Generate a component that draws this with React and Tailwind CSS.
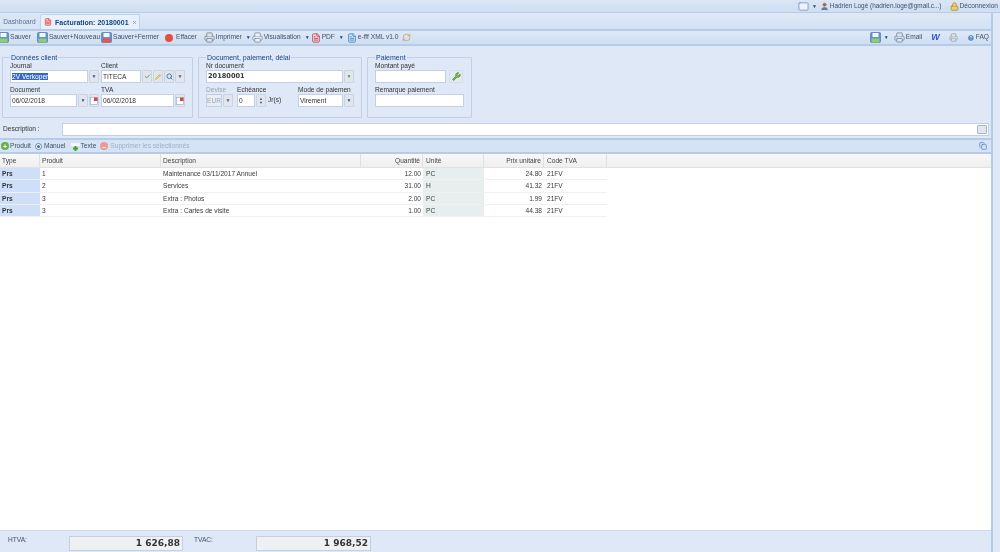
import React from "react";
import { Printer, FileText, Search, X, Mail, HelpCircle, Copy, User, Lock, Check, Wrench, RefreshCw, Pencil } from "lucide-react";

const Caret = () => <span className="ml-[3px] text-[5px] leading-none text-[#15428b]">▼</span>;

function Floppy({ accent = "#8fce6f", className = "" }) {
  return (
    <svg width="11" height="11" viewBox="0 0 11 11" className={"shrink-0 " + className}>
      <rect x="0.5" y="0.5" width="10" height="10" rx="1" fill="#5f93d0" stroke="#3f6fae" strokeWidth="0.6" />
      <rect x="2.5" y="1" width="6" height="4" fill="#f4f8fd" />
      <rect x="1.5" y="6.5" width="8" height="4" fill={accent} />
    </svg>
  );
}

function ToolBtn({ icon, label, caret, muted, className = "" }) {
  return (
    <div className={"flex items-center gap-px whitespace-nowrap " + className}>
      {icon}
      <span className={muted ? "text-[#9fb0c9]" : "text-[#40506b]"}>{label}</span>
      {caret && <Caret />}
    </div>
  );
}

function Field({ label, className = "", labelColor = "text-[#333]", children }) {
  return (
    <div className={"flex flex-col " + className}>
      <span className={"h-[9px] leading-[9px] " + labelColor}>{label}</span>
      <div className="flex items-center gap-px">{children}</div>
    </div>
  );
}

const Input = ({ value = "", className = "", children }) => (
  <div className={"h-[13px] border border-[#c3cfe2] bg-white px-px leading-[11px] text-[#333] " + className}>{children ?? value}</div>
);

const Trig = ({ children }) => (
  <div className="flex h-[13px] w-[10px] shrink-0 items-center justify-center rounded-[1px] border border-[#c9d3e2] bg-[#e2e6ec]">
    {children ?? <span className="text-[5px] leading-none text-[#2f5a98]">▼</span>}
  </div>
);

const Cal = () => (
  <Trig>
    <svg width="8" height="8" viewBox="0 0 8 8">
      <rect x="0.5" y="0.5" width="7" height="7" fill="#fff" stroke="#9aa7bb" strokeWidth="0.6" />
      <rect x="4" y="0.5" width="3.5" height="3.5" fill="#d8434f" />
    </svg>
  </Trig>
);

function Group({ title, className, children }) {
  return (
    <fieldset className={"h-[64px] min-w-0 rounded-[1px] border border-[#c3cfe2] px-[7px] pb-0 " + className}>
      <legend className="px-px text-[7px] leading-[7px] text-[#15428b]">{title}</legend>
      {children}
    </fieldset>
  );
}

const rows = [
  ["Prs", "1", "Maintenance 03/11/2017 Annuel", "12.00", "PC", "24.80", "21FV"],
  ["Prs", "2", "Services", "31.00", "H", "41.32", "21FV"],
  ["Prs", "3", "Extra : Photos", "2.00", "PC", "1.99", "21FV"],
  ["Prs", "3", "Extra : Cartes de visite", "1.00", "PC", "44.38", "21FV"],
];

const cols = "grid w-[607px] shrink-0 grid-cols-[40px_121px_200px_62px_61px_60px_63px]";

export default function App() {
  return (
    <div className="flex h-[552px] w-[1000px] flex-col overflow-hidden bg-[#dfe8f6] font-['Liberation_Sans',sans-serif] text-[6.6px] leading-none blur-[0.45px]">
      {/* top strip */}
      <div className="flex h-[13px] shrink-0 items-center justify-end border-b border-[#b4cbe9] bg-linear-to-b from-[#dbe6f5] to-[#cfdef2] pr-[2px] text-[#40506b]">
        <div className="flex items-center">
          <Mail size={11} color="#7f9cc8" fill="#eef3fa" />
          <Caret />
        </div>
        <div className="ml-[3px] flex items-center gap-px">
          <User size={9} color="#b5651d" fill="#4d7cc0" />
          <span className="text-[6.4px]">Hadrien Logé (hadrien.loge@gmail.c...)</span>
        </div>
        <div className="ml-[8px] flex items-center gap-px">
          <Lock size={9} color="#a58a2a" fill="#e8cf6b" />
          <span>Déconnexion</span>
        </div>
      </div>

      <div className="flex min-h-0 flex-1">
        <div className="flex min-w-0 flex-1 flex-col">
          {/* tabs */}
          <div className="flex h-[18px] shrink-0 items-end border-b-2 border-[#b4cbe9] bg-linear-to-b from-[#dfe9f7] to-[#d3e1f3] pl-[1px]">
            <div className="flex h-[14px] w-[37px] items-center justify-center rounded-t-[1px] bg-[#d9e5f5] text-[#5a6f92]">Dashboard</div>
            <div className="ml-[2px] flex h-[15px] w-[100px] items-center gap-[3px] rounded-t-[2px] border border-b-0 border-[#c0d3ec] bg-[#e8f0fa] pl-[3px] text-[7px] font-bold text-[#15428b]">
              <FileText size={8} color="#d9333f" fill="#f6c6c6" className="shrink-0" />
              <span className="whitespace-nowrap">Facturation: 20180001</span>
              <X size={5} color="#7d8fae" strokeWidth={3} className="shrink-0" />
            </div>
          </div>

          {/* toolbar */}
          <div className="flex h-[15px] shrink-0 items-center border-b-2 border-[#b4cbe9] bg-linear-to-b from-[#dfe9f7] to-[#cfdef2]">
            <div className="flex items-center">
              <ToolBtn icon={<Floppy className="ml-[-2px]" />} label="Sauver" />
              <ToolBtn className="ml-[6px]" icon={<Floppy />} label="Sauver+Nouveau" />
              <ToolBtn className="ml-[1px]" icon={<Floppy accent="#e8574a" />} label="Sauver+Fermer" />
              <ToolBtn className="ml-[6px]" icon={<span className="mr-[2px] h-[8px] w-[8px] rounded-full bg-[#e2503f]" />} label="Effacer" />
              <ToolBtn className="ml-[7px]" icon={<Printer size={11} color="#7d8b9c" fill="#dfe5ec" />} label="Imprimer" caret />
              <ToolBtn className="ml-[1px]" icon={<Printer size={11} color="#8495ad" fill="#eef2f7" />} label="Visualisation" caret />
              <ToolBtn className="ml-[1px]" icon={<FileText size={10} color="#d9333f" />} label="PDF" caret />
              <ToolBtn className="ml-[3px]" icon={<FileText size={10} color="#3f83c6" fill="#cfe3f6" />} label="e-fff XML v1.0" />
              <RefreshCw size={9} color="#c79b63" className="ml-[4px]" />
            </div>
            <div className="ml-auto flex items-center pr-[2px]">
              <div className="flex items-center"><Floppy /><Caret /></div>
              <ToolBtn className="ml-[5px]" icon={<Printer size={11} color="#7d8fae" fill="#dfe5ec" />} label="Email" />
              <span className="ml-[9px] text-[9px] font-bold italic leading-none text-[#3057c0]">W</span>
              <Printer size={9} color="#9aa3ae" fill="#dfe3e8" className="ml-[9px]" />
              <ToolBtn className="ml-[9px]" icon={<HelpCircle size={8} color="#fff" fill="#4d83c4" />} label="FAQ" />
            </div>
          </div>

          {/* form */}
          <div className="shrink-0 px-[2px] pt-[8px]">
            <div className="flex gap-[5px]">
              <Group title="Données client" className="w-[191px]">
                <div className="flex gap-[2px]">
                  <Field label="Journal" className="w-[89px]">
                    <Input className="min-w-0 flex-1 border-[#9ab9e4]">
                      <span className="bg-[#3568c9] text-white">2V Verkoper</span>
                    </Input>
                    <Trig />
                  </Field>
                  <Field label="Client" className="flex-1">
                    <Input value="TITECA" className="min-w-0 flex-1" />
                    <Trig><Check size={7} strokeWidth={3} color="#4f9a3c" /></Trig>
                    <Trig><Pencil size={6} color="#c9a32e" fill="#ecd37a" /></Trig>
                    <Trig><Search size={7} strokeWidth={3} color="#3b6fb5" /></Trig>
                    <Trig />
                  </Field>
                </div>
                <div className="mt-[2px] flex gap-[2px]">
                  <Field label="Document" className="w-[89px]">
                    <Input value="06/02/2018" className="min-w-0 flex-1" />
                    <Trig />
                    <Cal />
                  </Field>
                  <Field label="TVA" className="flex-1">
                    <Input value="06/02/2018" className="min-w-0 flex-1" />
                    <Cal />
                  </Field>
                </div>
              </Group>

              <Group title="Document, paiement, délai" className="w-[164px]">
                <Field label="Nr document">
                  <Input value="20180001" className="min-w-0 flex-1 font-['DejaVu_Sans',sans-serif] font-bold" />
                  <Trig><span className="text-[5px] leading-none text-[#4f9a3c]">▼</span></Trig>
                </Field>
                <div className="mt-[2px] flex">
                  <Field label="Devise" className="w-[27px]" labelColor="text-[#9aa5b5]">
                    <div className="h-[13px] min-w-0 flex-1 border border-[#c3cfe2] bg-[#e8edf4] leading-[11px] text-[#9aa5b5]">EUR</div>
                    <Trig />
                  </Field>
                  <Field label="Echéance" className="ml-[4px] w-[45px]">
                    <Input value="0" className="w-[18px]" />
                    <Trig>
                      <span className="flex flex-col text-[4px] leading-[4px] text-[#3b5f96]"><span>▲</span><span>▼</span></span>
                    </Trig>
                    <span className="ml-[1px] whitespace-nowrap text-[#333]">Jr(s)</span>
                  </Field>
                  <Field label="Mode de paiemen" className="ml-[16px] flex-1">
                    <Input value="Virement" className="min-w-0 flex-1" />
                    <Trig />
                  </Field>
                </div>
              </Group>

              <Group title="Paiement" className="w-[105px]">
                <Field label="Montant payé">
                  <Input className="w-[71px]" />
                  <div className="ml-[2px] flex h-[13px] w-[14px] items-center justify-center rounded-[1px] border border-[#d4dde9] bg-[#e4e9f0]">
                    <Wrench size={9} color="#4f9a3c" fill="#7bbd5e" strokeWidth={2.5} />
                  </div>
                </Field>
                <Field label="Remarque paiement" className="mt-[2px]">
                  <Input className="w-[90px]" />
                </Field>
              </Group>
            </div>

            <div className="mt-[5px] flex h-[13px] items-center">
              <span className="w-[60px] pl-[1px] text-[#333]">Description :</span>
              <div className="flex h-[13px] flex-1 items-center justify-end border border-[#c3cfe2] bg-white pr-px">
                <div className="h-[9px] w-[10px] rounded-[1px] border border-[#a9b7cb] bg-[#dfe6f0]" />
              </div>
            </div>
            <div className="h-[2px]" />
          </div>

          {/* grid toolbar */}
          <div className="flex h-[16px] shrink-0 items-center border-y-2 border-[#b4cbe9] bg-[#d6e3f4] pl-[1px]">
            <ToolBtn icon={<span className="flex h-[8px] w-[8px] items-center justify-center rounded-full bg-[#63b04a] text-[7px] font-bold leading-none text-white">+</span>} label="Produit" />
            <ToolBtn className="ml-[3px]" icon={<span className="mx-[1px] flex h-[7px] w-[7px] items-center justify-center rounded-full border border-[#5a86c6] bg-white"><span className="h-[3px] w-[3px] rounded-full bg-[#3b6fb5]" /></span>} label="Manuel" />
            <ToolBtn
              className="ml-[5px]"
              icon={
                <svg width="9" height="9" viewBox="0 0 9 9">
                  <rect x="0" y="1" width="9" height="3" fill="#f4f7fb" />
                  <path d="M4.5 4v5M2 6.5h5" stroke="#4f9a3c" strokeWidth="2" />
                </svg>
              }
              label="Texte"
            />
            <ToolBtn className="ml-[4px]" muted icon={<span className="mr-px flex h-[8px] w-[8px] items-center justify-center rounded-full bg-[#eb9a92] text-[7px] font-bold leading-none text-white">–</span>} label="Supprimer les sélectionnés" />
            <Copy size={8} color="#4d7cc0" className="ml-auto mr-[4px]" />
          </div>

          {/* table */}
          <div className="min-h-0 flex-1 bg-white">
            <div className="flex h-[14px] border-b border-[#e2e2e2] bg-linear-to-b from-[#f8f8f8] to-[#efefef]">
              <div className={cols + " text-[#444]"}>
                {["Type", "Produit", "Description", "Quantité", "Unité", "Prix unitaire", "Code TVA"].map((h, i) => (
                  <div key={h} className={"border-r border-[#e0e0e0] px-[2px] leading-[13px] " + (i === 3 || i === 5 ? "text-right" : i > 3 ? "pl-[3px]" : "")}>{h}</div>
                ))}
              </div>
            </div>
            {rows.map((r, idx) => (
              <div key={idx} className={cols + " h-[12.25px] border-b border-[#f0f0f0] leading-[11px] text-[#3a3a3a]"}>
                <div className="bg-[#cfdff9] px-[2px] font-bold text-[#333]">{r[0]}</div>
                <div className="px-[2px]">{r[1]}</div>
                <div className="px-[2px]">{r[2]}</div>
                <div className="px-[2px] text-right">{r[3]}</div>
                <div className="bg-[#e8eeee] px-[3px]">{r[4]}</div>
                <div className="px-[2px] text-right">{r[5]}</div>
                <div className="px-[3px]">{r[6]}</div>
              </div>
            ))}
          </div>

          {/* totals */}
          <div className="flex h-[22px] shrink-0 items-center border-t border-[#cfdcef] bg-[#dfe8f6] text-[#40506b]">
            <span className="w-[69px] pb-[3px] pl-[8px]">HTVA:</span>
            <div className="mt-[3px] h-[15px] w-[114px] border border-[#c3cfe2] bg-[#eef1f4] pr-[2px] text-right font-['DejaVu_Sans',sans-serif] text-[9px] font-bold leading-[13px] text-[#333]">1 626,88</div>
            <span className="w-[73px] pb-[3px] pl-[11px]">TVAC:</span>
            <div className="mt-[3px] h-[15px] w-[115px] border border-[#c3cfe2] bg-[#eef1f4] pr-[2px] text-right font-['DejaVu_Sans',sans-serif] text-[9px] font-bold leading-[13px] text-[#333]">1 968,52</div>
          </div>
        </div>

        {/* right strip */}
        <div className="w-[9px] shrink-0 border-l-2 border-[#b4cbe9] bg-[#dfe8f6]" />
      </div>
    </div>
  );
}
